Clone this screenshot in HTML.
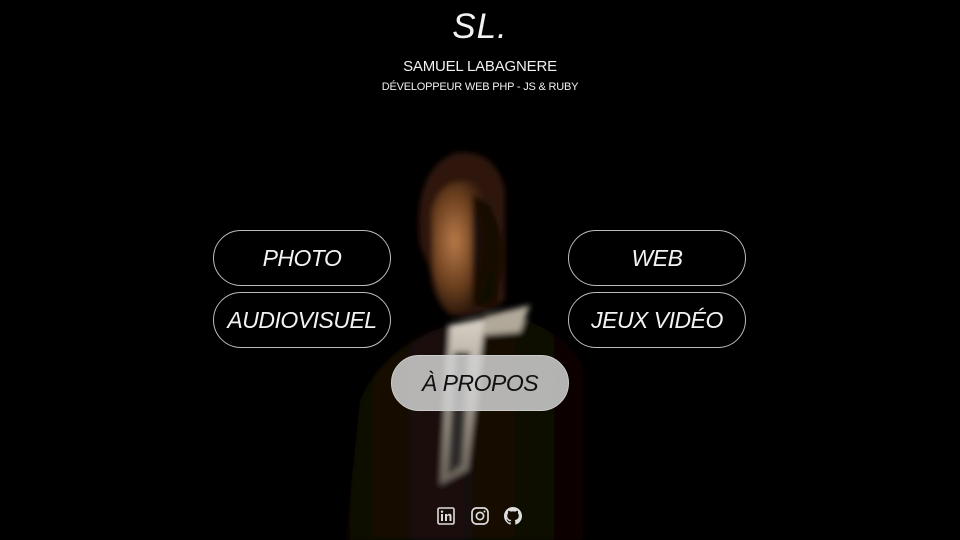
<!DOCTYPE html>
<html><head><meta charset="utf-8"><style>
html,body{margin:0;padding:0;background:#000;width:960px;height:540px;overflow:hidden;font-family:"Liberation Sans",sans-serif;color:#eee}
.logo{position:absolute;top:7px;left:0;width:960px;text-align:center;font-size:35px;font-style:italic;color:#f2f2f2;letter-spacing:1px}
.n{position:absolute;top:58px;width:960px;text-align:center;font-size:15px;color:#f0f0f0;letter-spacing:-0.2px}
.s{position:absolute;top:81px;width:960px;text-align:center;font-size:11px;color:#f0f0f0;letter-spacing:-0.2px}
.b{position:absolute;width:178px;height:56px;border:1px solid #bbb;border-radius:28px;box-sizing:border-box;text-align:center;line-height:54px;font-size:23px;font-style:italic;color:#f2f2f2;letter-spacing:-0.5px}
.a{background:rgba(210,210,210,.85);color:#111;border-color:#ccc}
svg.p{position:absolute;left:0;top:0}
.ic{position:absolute;top:507px}
</style></head><body>
<svg class="p" width="960" height="540">
<defs>
<radialGradient id="f" cx="0.35" cy="0.45" r="0.65"><stop offset="0" stop-color="#b87a48"/><stop offset="0.55" stop-color="#6a3e1e"/><stop offset="1" stop-color="#140a04"/></radialGradient>
<linearGradient id="su" x1="0" y1="0" x2="1" y2="0"><stop offset="0" stop-color="#0c0603"/><stop offset="0.35" stop-color="#1e1108"/><stop offset="1" stop-color="#030201"/></linearGradient>
<linearGradient id="sh" x1="0" y1="0" x2="0" y2="1"><stop offset="0" stop-color="#d8d0c4"/><stop offset="1" stop-color="#6a6258"/></linearGradient>
<filter id="bl"><feGaussianBlur stdDeviation="3"/></filter>
</defs>
<g filter="url(#bl)">
<path d="M345 540 L360 400 Q385 345 450 325 L525 320 Q585 340 600 410 L605 540Z" fill="url(#su)"/>
<path d="M450 325 L485 318 L468 470 L440 485Z" fill="url(#sh)"/>
<path d="M454 352 L470 352 L462 465 L448 475Z" fill="#2e2c2a"/>
<path d="M485 316 L530 305 L520 332 L482 335Z" fill="#b0a898"/>
<path d="M420 245 Q412 170 455 153 Q495 148 505 190 L505 300 Q480 320 450 315 Q432 300 430 270Z" fill="#2e180b"/>
<path d="M432 210 Q440 178 470 182 Q496 192 496 240 L492 295 Q470 318 448 312 Q436 295 433 270Z" fill="url(#f)"/>
<path d="M472 195 Q502 205 502 260 L497 302 Q482 312 472 302Z" fill="#0e0602" opacity=".8"/>
</g>
</svg>
<div class="logo">SL.</div>
<div class="n">SAMUEL LABAGNERE</div>
<div class="s">DÉVELOPPEUR WEB PHP - JS &amp; RUBY</div>
<div class="b" style="left:213px;top:230px">PHOTO</div>
<div class="b" style="left:568px;top:230px">WEB</div>
<div class="b" style="left:213px;top:292px">AUDIOVISUEL</div>
<div class="b" style="left:568px;top:292px">JEUX VIDÉO</div>
<div class="b a" style="left:391px;top:355px">À PROPOS</div>
<svg class="ic" style="left:437px" width="18" height="18" viewBox="0 0 18 18"><rect x="1" y="1" width="16" height="16" rx="1.5" fill="none" stroke="#ddd" stroke-width="1.6"/><rect x="4" y="7" width="2" height="7" fill="#ddd"/><circle cx="5" cy="4.7" r="1.2" fill="#ddd"/><path d="M8 14V7h2v1q1-1.3 2.5-1.3Q14.5 6.7 14.5 9.5V14h-2v-4q0-1.5-1.2-1.5T10 10v4Z" fill="#ddd"/></svg>
<svg class="ic" style="left:471px" width="18" height="18" viewBox="0 0 18 18"><rect x="1" y="1" width="16" height="16" rx="4.5" fill="none" stroke="#ddd" stroke-width="1.7"/><circle cx="9" cy="9" r="3.6" fill="none" stroke="#ddd" stroke-width="1.7"/><circle cx="13.5" cy="4.5" r="1" fill="#ddd"/></svg>
<svg class="ic" style="left:504px" width="18" height="18" viewBox="0 0 16 16"><path fill="#ddd" d="M8 0C3.58 0 0 3.58 0 8c0 3.54 2.29 6.53 5.47 7.59.4.07.55-.17.55-.38 0-.19-.01-.82-.01-1.49-2.01.37-2.53-.49-2.69-.94-.09-.23-.48-.94-.82-1.13-.28-.15-.68-.52-.01-.53.63-.01 1.08.58 1.23.82.72 1.21 1.87.87 2.33.66.07-.52.28-.87.51-1.07-1.78-.2-3.64-.89-3.64-3.95 0-.87.31-1.59.82-2.15-.08-.2-.36-1.02.08-2.12 0 0 .67-.21 2.2.82.64-.18 1.32-.27 2-.27.68 0 1.36.09 2 .27 1.53-1.04 2.2-.82 2.2-.82.44 1.1.16 1.92.08 2.12.51.56.82 1.27.82 2.15 0 3.07-1.87 3.75-3.65 3.95.29.25.54.73.54 1.48 0 1.07-.01 1.93-.01 2.2 0 .21.15.46.55.38A8.013 8.013 0 0016 8c0-4.42-3.58-8-8-8z"/></svg>
</body></html>
